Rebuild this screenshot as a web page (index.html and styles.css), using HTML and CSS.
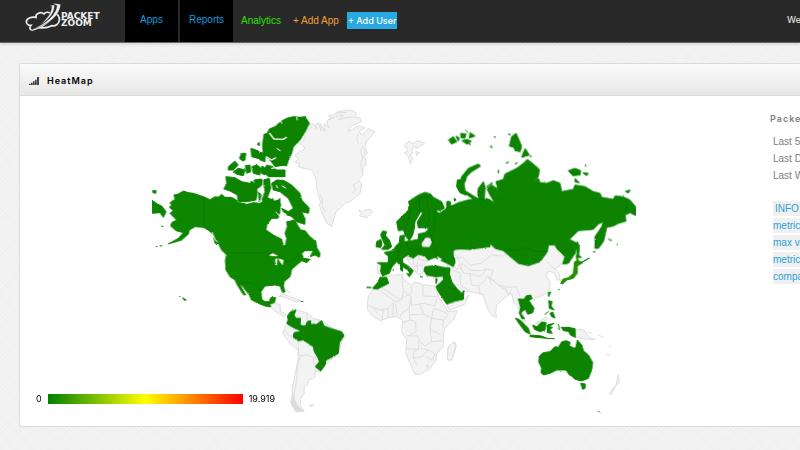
FILE: index.html
```html
<!DOCTYPE html>
<html lang="en">
<head>
<meta charset="utf-8">
<title>PacketZoom HeatMap</title>
<link rel="stylesheet" href="styles.css">
</head>
<body>
<header class="topbar">
  <a class="logo" href="#">
    <svg class="logo-mark" viewBox="0 0 108 90" aria-hidden="true">
      <path class="cloud" d="M75 34 C70 28 60 31 57 36 C48 27 30 35 33 46 C20 43 3 49 4 60 C5 67 11 71 18 70 C12 78 14 85 23 84 C41 79 61 69 75 54"/>
      <path class="cloud" d="M87 33 C97 34 105 44 103 55 C101 67 91 73 80 71 C68 78 53 78 42 77"/>
      <path class="swoosh" d="M84 5 Q91 4 107 7 C105 38 76 67 20 83 C62 65 94 38 96 11 Z"/>
      <path class="swoosh" d="M72 12 L88 8 C90 28 76 51 47 67 C69 48 80 31 80 13 Z"/>
    </svg>
    <span class="wordmark">PACKET<br>ZOOM</span>
  </a>
  <nav class="nav">
    <a class="tab" href="#">Apps</a>
    <a class="tab" href="#">Reports</a>
    <a class="link analytics" href="#">Analytics</a>
    <a class="link add-app" href="#">+ Add App</a>
    <a class="add-user" href="#">+ Add User</a>
  </nav>
  <span class="welcome">We</span>
</header>
<main class="page">
  <section class="panel">
    <div class="panel-head">
      <svg class="bars" viewBox="0 0 30 24" aria-hidden="true"><path d="M0 20h5v4H0zM6 17h5v7H6zM12 13h5v11h-5zM18 8h5v16h-5zM24 0h6v24h-6z"/></svg>
      <h1>HeatMap</h1>
    </div>
    <div class="panel-body">
      <div class="map-area">
        <svg class="map" viewBox="450 315 1470 936" role="img" aria-label="World heat map">
          <defs>
            <filter id="coast" x="0" y="0" width="100%" height="100%">
              <feTurbulence type="fractalNoise" baseFrequency="0.25" numOctaves="2" seed="4"/>
              <feDisplacementMap in="SourceGraphic" scale="5" xChannelSelector="R" yChannelSelector="G"/>
            </filter>
          </defs>
          <!-- Countries without data -->
          <g class="land">
            <g transform="translate(750 315)">
              <path d="M135 150L150 140 165 130 158 122 150 115 165 103 165 95 155 85 170 82 165 72 185 68 178 60 190 56 200 72 198 56 205 54 214 78 210 55 224 80 222 56 238 68 230 52 233 45 250 40 235 32 250 30 262 20 290 15 310 18 320 25 315 38 330 38 335 50 305 62 292 80 310 72 325 62 345 68 328 80 335 90 355 70 374 80 350 110 345 125 352 145 340 155 348 160 348 180 335 190 340 210 325 225 335 240 330 265 318 275 300 290 285 295 265 315 258 320 250 345 245 365 230 355 215 320 208 300 212 290 208 280 200 250 200 230 192 205 185 195 160 190 145 185 150 175 135 172 145 162Z"/>
              <path d="M325 315L335 320 345 316 360 312 367 322 350 338 328 333 335 326Z"/>
              <path d="M236 42L256 35 280 30 265 45 290 38 310 35M340 120L332 140 338 160 332 180 340 200M325 230L310 240 318 255 306 265M210 270L218 285 216 300 225 320M325 85L320 100 325 115M345 130L345 150M258 24L290 22"/>
            </g>
            <g transform="translate(1080 315)">
              <path d="M133 120L147 108 160 117 166 110 180 108 194 116 184 120 174 130 160 124 156 136 158 145 150 150 158 160 151 177 145 155 134 143 144 138ZM168 138L178 144 169 151Z"/>
            </g>
            <g transform="translate(450 630)">
              <path d="M350 290L362 282 378 280 390 284 392 305 410 313 403 319 382 309 365 295ZM385 260L400 252 420 260 438 267 452 272 440 277 420 268 400 260ZM408 238L424 252"/>
            </g>
            <g transform="translate(810 870)">
              <path d="M52 100L55 78 78 60 110 68 130 85 155 92 222 135 205 190 165 225 153 243 135 245 135 262 115 270 113 285 103 290 102 312 92 325 90 345 103 363 80 366 67 350 62 335 68 320 66 300 76 250 84 210 84 180 60 160 38 130 46 110Z"/>
              <path d="M84 150L86 195 98 198 110 194 120 199 145 205M132 200L128 218 140 225M92 195L82 230 80 270 72 315 74 340 90 355M84 125L62 140 42 122M110 70L112 95M132 85L130 103M145 88L145 104M119 345L132 345 123 350ZM136 230L135 248"/>
              <path class="shade" d="M68 308L63 338 78 365 100 364 82 348 74 330Z"/>
            </g>
            <g transform="translate(1080 780)">
              <path d="M22 130L25 110 40 87 65 55 85 49 105 45 128 43 130 60 155 75 165 66 200 76 225 78 235 110 255 140 265 155 292 152 280 180 255 205 250 225 250 260 230 280 228 300 210 325 185 342 165 343 155 320 137 280 140 240 125 215 128 180 110 170 90 172 60 182 35 165 22 148Z"/>
              <path d="M262 285L265 262 274 258 284 246 289 258 275 300 263 300ZM228 75L240 62 262 58 268 132 310 118 326 105 315 132 268 151 262 135Z"/>
              <path d="M52 87L105 124 84 145 60 150 22 135M65 83L120 118 155 98 155 76M125 48L130 92 153 110 147 145 125 160 120 172M188 72L189 108 230 110M130 92L125 120 107 125M155 140L153 110M155 136L190 130 225 138 230 115M147 145L150 180 128 188M150 165L190 162 180 134M190 162L215 175 220 145 238 150 265 162M215 175L250 180 265 165M250 180L249 205M215 175L210 208 245 225M210 208L215 245 195 258 178 242 173 228 140 227M150 180L167 184 168 215 150 225M178 242L175 268 138 266M215 245L245 242M175 268L160 275 160 295 170 315M160 294L185 290 205 270 180 265M205 270L224 280 218 302 200 290M84 145L84 172M70 147L66 180M42 142L52 160M100 130L98 170M106 130L112 168M198 317L207 315 203 323Z"/>
            </g>
            <g transform="translate(1080 540)">
              <path d="M138 208L175 212 190 230 205 240 195 252 185 258 192 272 180 285 168 278 160 260 142 242ZM52 250L64 252 64 282 53 280ZM225 285L255 285 245 315 230 318Z"/>
              <path d="M142 222L175 222 178 240 200 242M160 232L162 260 185 256M172 245L172 275M150 230L145 242"/>
            </g>
            <g transform="translate(1320 690)">
              <path d="M20 100L40 108 32 75 50 60 90 60 95 35 120 28 160 35 330 30 350 50 355 70 378 85 360 105 345 115 358 133 361 148 352 151 342 128 325 123 318 138 331 155 327 185 300 200 285 203 283 213 275 203 258 205 238 205 240 225 256 275 250 278 232 228 220 215 215 190 195 202 170 225 167 250 170 262 155 257 140 230 130 195 115 190 90 185 60 185 35 165 28 140Z"/>
              <path d="M42 70L55 85 65 80 92 105 125 100 135 90 155 75 188 78 205 68M52 92L72 130 95 132 120 140 140 118 160 120 150 145 175 165 205 172 230 170 240 200M60 120L65 100 90 120 115 122 140 118M30 120L60 128 62 165 88 182M90 132L94 165 115 168 132 155 142 138 165 155M115 168L120 190M145 140L155 165M195 172L205 195 215 178M175 165L198 180M320 95L345 118 360 105"/>
              <path d="M410 298L432 300 450 325 465 328 440 328 405 322ZM444 308L456 309M475 315L490 322M498 372L510 376M506 346L513 352M535 433L538 458 525 470 513 495 508 490 528 465ZM285 278L300 273 318 260 320 270 300 282ZM22 382L25 350 42 335 47 350 35 390 23 390Z"/>
              <path class="water" d="M40 88L52 84 58 98 50 120 44 108Z"/>
            </g>
          </g>

          <!-- Countries with data -->
          <g class="data" filter="url(#coast)">
            <g transform="translate(450 630)">
              <path class="north" d="M60 -22L75 -32 72 -45 85 -48 100 -57 115 -52 130 -50 160 -40 180 -31 195 -40 205 -38 215 -47 225 -38 245 -38 270 -23 290 -17 310 -22 330 -20 345 -30 355 -18 368 -35 374 -20 390 -35 390 5 384 25 365 25 350 45 348 60 370 75 395 88 400 108 407 105 410 85 405 70 412 50 410 35 422 33 435 30 442 45 452 60 465 62 480 80 498 95 500 112 510 130 508 142 495 135 480 140 490 122 465 122 455 130 460 145 480 148 470 158 455 152 440 165 425 178 420 200 402 215 400 228 405 245 398 248 390 228 375 225 345 228 333 245 335 268 345 275 358 275 362 263 377 263 373 278 360 281 362 290 345 288 325 280 305 270 298 255 280 232 268 218 272 228 287 255 280 254 262 225 255 210 240 200 228 180 226 150 230 135 215 120 205 100 195 100 190 75 175 60 160 52 135 50 118 60 115 72 95 90 55 102 85 85 100 68 78 62 62 48 65 38 80 30 60 10 70 2 58 -8 65 -15Z"/>
              <path d="M6 -30L22 -18 35 -12 48 5 40 22 30 8 6 10ZM8 -58L18 -58 17 -50 9 -52ZM35 48L40 50ZM18 110L22 109ZM30 107L35 108ZM88 259L91 260ZM98 263L108 270 104 272ZM453 274L459 275Z"/>
              <path class="border" d="M162 -38L162 52 185 65 208 102M232 128L355 128 385 140 402 160 435 148 445 133M268 218L305 218 325 232 333 245"/>
              <path class="water" d="M358 136L368 130 383 138 368 138ZM376 165L376 148 382 145 380 165ZM386 146L400 150 398 165 390 155Z"/>
              <path class="fjord" d="M262 -26L285 -22 300 -22M378 5L390 20M186 66L196 90 204 96"/>
            </g>
            <g transform="translate(450 315)">
              <path d="M228 215L255 218 275 230 300 235 305 228 318 240 322 262 318 285 290 290 265 290 262 270 240 258 222 252 230 235ZM235 185L255 168 264 180 250 195 235 195ZM268 160L275 145 287 145 285 165 278 168ZM250 200L265 190 285 195 280 212 260 208ZM286 182L300 180 302 200 290 205ZM303 130L325 138 330 162 305 155ZM330 145L345 155 345 170 330 165ZM322 118L328 112 328 122ZM306 185L320 180 334 190 330 210 310 205ZM312 225L335 222 336 240 320 252ZM326 262L334 270 328 290ZM340 225L358 220 362 250 352 278 368 285 374 310 350 300 336 285 345 260Z"/>
            </g>
            <g transform="translate(750 315)">
              <path d="M58 72L75 65 95 48 110 40 130 35 150 37 165 35 178 55 165 80 150 105 130 125 125 145 115 165 110 182 75 185 60 165 40 150 38 120 42 88 52 85ZM50 180L68 185 80 195 105 195 105 215 55 215 40 200ZM18 138L40 145 45 160 25 160ZM36 183L44 188 44 210 35 205ZM65 235L80 225 100 226 125 240 150 265 155 285 178 310 175 325 155 320 165 342 164 358 140 350 125 335 100 320 95 310 115 320 130 310 115 280 90 260 70 255ZM70 290L85 285 92 302 80 310ZM110 330L118 322 130 334Z"/>
              <path class="channel" d="M58 84L72 102 100 103 110 96M48 155L65 165 78 158M65 190L100 184 108 188"/>
              <path class="fjord" d="M80 130L92 138M92 48L96 56M140 36L142 46M95 242L108 250M78 240L84 250"/>
            </g>
            <g transform="translate(810 870)">
              <path d="M72 128L90 125 88 105 105 108 112 95 122 92 122 103 140 103 155 92 162 108 190 118 215 125 222 137 208 158 205 190 183 203 168 210 165 225 152 243 136 230 148 215 145 205 133 185 130 170 112 158 100 150 85 152 70 142Z"/>
              <path d="M50 100L55 90 52 78 62 65 78 60 72 75 78 85 92 85 90 105 88 120 75 115 62 108Z"/>
            </g>
            <g transform="translate(1080 540)">
              <path d="M110 125L125 110 145 90 148 72 145 65 175 45 195 37 212 42 220 52 245 65 253 85 240 92 228 90 234 105 246 97 258 90 262 78 285 78 300 72 330 60 345 55 390 60 390 200 330 208 285 205 275 220 285 240 280 260 262 250 240 240 225 232 205 240 195 228 175 223 160 234 142 226 128 235 128 248 145 258 160 272 152 285 144 270 120 255 110 245 95 262 88 280 68 288 62 275 64 255 52 248 85 248 85 228 72 218 98 212 110 195 118 188 120 168 133 165 132 185 155 182 175 178 175 162 195 158 206 148 200 143 175 143 172 125 188 100 182 95 165 125 163 145 158 165 148 182 138 170 130 150 115 152Z"/>
              <path d="M68 153L80 155 76 166 88 180 95 200 85 208 65 208 75 195 68 180 62 165ZM50 185L62 178 66 190 62 203 48 200ZM195 260L225 257 250 262 270 264 268 282 255 288 225 290 200 285 192 272ZM122 255L128 258 128 274 122 270ZM140 280L152 284 148 290ZM292 0L318 0 300 18 318 45 300 38 290 20ZM262 65L272 70 265 80ZM282 55L288 58 284 64ZM354 30L364 25 364 55 354 50ZM98 270L102 270ZM228 295L232 298 228 310ZM180 290L188 291Z"/>
              <path class="border" d="M142 130L150 95 175 55 210 48M178 95L178 55M200 50L208 120 195 140M210 155L218 185 245 205 248 230M110 195L118 215 110 242M140 185L145 205 175 210 185 205"/>
              <path class="land" d="M186 190L197 174 210 175 214 188 208 200 187 199Z"/>
              <path class="water" d="M232 230L246 237 237 244Z"/>
            </g>
            <g transform="translate(1080 780)">
              <path d="M228 80L250 60 250 40 268 42 275 65 290 85 305 100 312 92 310 118 285 123 260 132 245 110 235 95ZM38 85L55 65 60 52 80 52 86 70 70 78 52 87ZM20 82L34 83Z"/>
              <path class="border" d="M245 65L275 88 290 86"/>
            </g>
            <g transform="translate(1320 360)">
              <path d="M-15 275L0 280 15 268 35 258 55 248 85 240 115 245 125 255 135 265 140 250 138 235 150 240 165 250 150 225 140 205 155 195 170 205 178 225 168 185 190 178 195 162 230 145 250 130 262 118 280 132 298 148 295 170 275 188 295 175 300 188 320 190 340 182 360 190 365 215 400 208 405 195 435 200 460 215 480 220 485 232 520 238 525 228 548 230 570 240 588 262 588 287 570 278 555 285 558 303 535 310 520 318 500 322 495 345 490 365 475 385 465 385 465 350 485 320 490 305 475 312 460 328 415 332 388 358 412 370 405 400 385 430 368 432 375 410 350 385 345 375 325 375 322 395 300 425 265 437 235 430 205 405 190 392 165 385 150 370 125 360 92 370 90 385 60 385 38 390 40 410 45 430 30 430 0 410 -20 380Z"/>
              <path d="M82 225L60 215 55 200 65 170 85 145 115 132 122 138 95 155 80 170 72 190 75 212 120 240 110 245ZM115 205L130 185 135 200 133 240 118 240ZM412 365L418 380 416 405 424 412 410 413ZM208 78L215 50 228 40 238 62 245 80 240 95 225 92 222 82ZM255 85L268 105 245 112ZM385 152L405 145 422 152 420 165 398 167ZM428 158L445 160 440 167ZM405 175L418 188 405 186ZM556 214L570 210 566 218ZM150 80L157 82ZM162 50L167 52ZM198 130L206 126ZM225 132L232 128ZM175 150L175 160ZM435 137L439 138ZM205 42L212 45ZM270 108L275 110ZM505 357L515 362ZM530 373L533 374ZM20 245L30 244 32 255 20 260ZM140 200L155 190ZM156 186L155 195"/>
              <path d="M25 60L40 50 50 65 35 72ZM48 48L58 54 54 63ZM62 40L78 42 74 55 63 53ZM66 62L82 58 94 64 80 72ZM76 30L84 38ZM90 38L105 48 88 54ZM84 70L92 74Z"/>
              <path class="border" d="M190 392L210 388 235 392 245 380 290 395 322 395M560 238L558 275"/>
            </g>
            <g transform="translate(1320 690)">
              <path class="japan" d="M362 160L368 148 385 143 400 130 402 110 404 95 415 92 428 98 412 108 412 130 400 145 380 150 368 162ZM410 75L415 95 410 98Z"/>
              <path d="M235 207L253 208 258 198 272 195 276 206 267 212 282 235 278 248 263 253 256 238 245 245 243 252 254 266 246 266 238 250 242 232ZM226 264L240 270 265 295 270 312 255 305 238 282ZM270 315L305 318 320 325 270 320ZM278 285L290 290 305 276 318 278 315 300 300 305 283 298ZM322 285L342 280 326 290 338 292 330 298 336 310 322 308ZM320 325L344 326M325 188L332 186 326 200ZM326 212L336 215 333 228 342 240 328 235ZM314 254L326 244M330 250L338 246 345 264 335 260ZM355 282L358 300M364 292L385 292 405 296 406 322 392 316 385 304 370 302ZM355 180L358 178ZM425 97L448 84ZM460 65L465 66Z"/>
              <path d="M298 378L310 368 330 365 345 350 355 352 365 336 378 332 390 337 388 348 403 355 408 350 412 330 425 345 430 362 445 375 458 398 455 420 445 445 425 453 405 448 395 438 388 435 378 420 350 420 330 430 310 435 303 428 305 415 296 395ZM422 460L436 462 435 475 428 478ZM476 544L479 547Z"/>
            </g>
          </g>
        </svg>
        <div class="legend"><span>0</span><i class="scale"></i><span>19.919</span></div>
      </div>
      <aside class="side">
        <h2>Packe</h2>
        <ul class="periods"><li>Last 5</li><li>Last D</li><li>Last W</li></ul>
        <ul class="info"><li class="info-title">INFO:</li><li>metric</li><li>max va</li><li>metric</li><li>compa</li></ul>
      </aside>
    </div>
  </section>
</main>
</body>
</html>
```
FILE: styles.css
```css
* { box-sizing: border-box; }
body {
  margin: 0;
  min-height: 100vh;
  overflow: hidden;
  font-family: Inter, "Liberation Sans", sans-serif;
  font-size: 9px;
  color: #000;
  background-color: #f3f3f3;
  background-image:
    repeating-linear-gradient(45deg, rgba(0, 0, 0, .012) 0 1px, transparent 1px 3px),
    repeating-linear-gradient(-45deg, rgba(0, 0, 0, .012) 0 1px, transparent 1px 3px);
}
a { text-decoration: none; }
h1, h2, ul { margin: 0; padding: 0; }
ul { list-style: none; }

.topbar {
  display: flex;
  height: 43px;
  background: #292929;
  border-bottom: 1px solid #666;
  box-shadow: 0 1px 3px rgba(0, 0, 0, .15);
}
.logo { display: flex; flex: 0 0 125px; padding-left: 25px; color: #eee; }
.logo-mark { width: 36px; height: 30px; margin-top: 2px; }
.cloud { fill: none; stroke: #eee; stroke-width: 5; }
.swoosh { fill: #eee; stroke: #292929; stroke-width: 1; }
.wordmark {
  padding-top: 13px;
  font: bold 9px/7px "DejaVu Sans", sans-serif;
}
.nav { display: flex; align-items: center; height: 42px; line-height: 17px; padding-bottom: 2px; }
.tab, .link { font-family: "Liberation Sans", Arial, sans-serif; font-size: 10px; }
.tab {
  align-self: flex-start;
  width: 53px;
  height: 42px;
  margin-right: 2px;
  line-height: 40px;
  text-align: center;
  color: #149bdf;
  background: #000;
}
.link { margin-left: 6px; margin-right: 6px; }
.analytics { color: #2be000; }
.add-app { color: #f0a030; }
.add-user {
  margin-left: 2px;
  padding: 0 1px;
  font-weight: 500;
  color: #fff;
  background: #29a9e1;
}
.welcome { width: 13px; margin-left: auto; line-height: 39px; font-weight: 500; color: #ddd; }

.page { padding: 20px 0 23px 19px; }
.panel {
  background: #fff;
  border: 1px solid #dadada;
  border-right: 0;
  border-radius: 3px 0 0 3px;
}
.panel-head {
  display: flex;
  align-items: center;
  height: 32px;
  padding: 2px 9px 0;
  gap: 8px;
  border-bottom: 1px solid #dadada;
  background: linear-gradient(#fafafa, #e7e7e7);
}
.bars { width: 10px; height: 8px; fill: #444; }
h1 { font-size: 9px; font-weight: 600; letter-spacing: 1px; }
.panel-body { display: flex; }
.map-area { position: relative; flex: 1; padding: 9px 0; }
.map { display: block; width: 100%; height: 312px; }
.land { fill: #f3f3f3; stroke: #dedede; stroke-width: 3; stroke-linejoin: round; }
.shade { fill: #dcdcdc; }
.land .water { fill: #fff; }
.data { fill: #088300; stroke: #088300; stroke-width: 3; stroke-linejoin: round; }
.data .north { fill: #108600; stroke: #108600; }
.data .border { fill: none; stroke: #067300; stroke-width: 2; }
.data .water { fill: #fff; stroke: #fff; stroke-width: 1; }
.data .channel { fill: none; stroke: #fff; stroke-width: 4; }
.data .fjord { fill: none; stroke: #fff; stroke-width: 3; }
.data .land { fill: #f3f3f3; stroke: #dcdcdc; }
.data .japan { fill: #258c00; stroke: #258c00; }
.legend {
  position: absolute;
  left: 16px;
  bottom: 21px;
  display: flex;
  align-items: center;
  gap: 6px;
  line-height: 12px;
}
.scale { width: 195px; height: 10px; background: linear-gradient(90deg, #008000, #ff0 50%, #f00); }
.side {
  flex: 0 0 30px;
  padding-top: 17px;
  font-family: "Liberation Sans", Arial, sans-serif;
  font-size: 10px;
  line-height: 15px;
  white-space: nowrap;
  color: #808080;
  overflow: hidden;
}
.side h2 { font-family: Inter, sans-serif; font-size: 9px; font-weight: 600; line-height: 12px; letter-spacing: 1px; }
.side li { margin: 2px 0 0 3px; }
.periods { padding-top: 7px; }
.info { padding-top: 16px; color: #29a0dc; }
.info li { background: #f0f0f0; }
.info .info-title { padding-left: 2px; }
```
